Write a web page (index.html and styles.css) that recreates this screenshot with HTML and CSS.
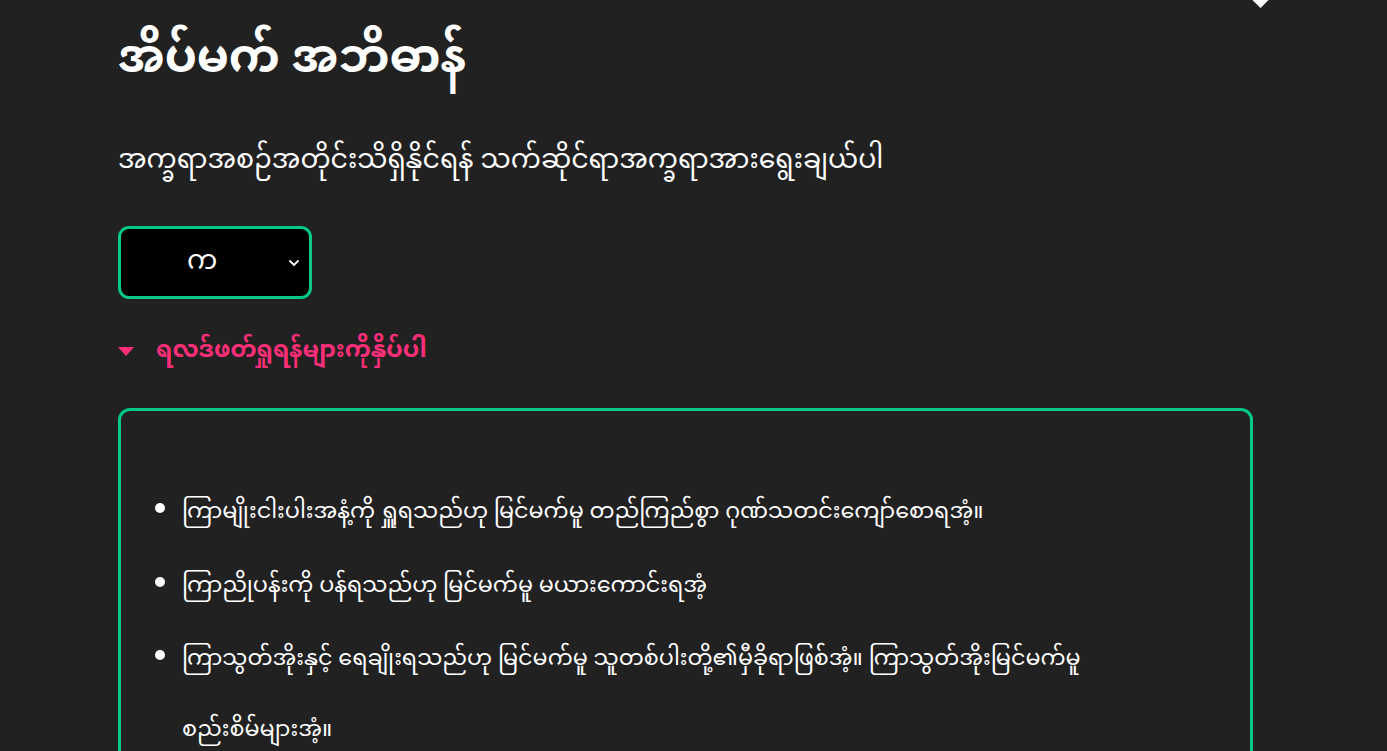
FILE: index.html
```html
<!DOCTYPE html>
<html lang="my">
<head>
<meta charset="utf-8">
<title>အိပ်မက် အဘိဓာန်</title>
<link rel="stylesheet" href="styles.css">
</head>
<body>
<div class="corner-tip"></div>
<main class="page">
  <h1 class="title">အိပ်မက် အဘိဓာန်</h1>
  <p class="subtitle">အက္ခရာအစဉ်အတိုင်းသိရှိနိုင်ရန် သက်ဆိုင်ရာအက္ခရာအားရွေးချယ်ပါ</p>
  <div class="select">
    <span class="select-value">က</span>
    <svg class="chevron" width="12" height="8" viewBox="0 0 12 8"><path d="M1.5 1.5 L6 6 L10.5 1.5" fill="none" stroke="#fff" stroke-width="1.8"/></svg>
  </div>
  <div class="summary">
    <svg class="marker" width="16" height="10" viewBox="0 0 16 10"><path d="M0 0 H16 L8 9 Z" fill="#ff2e78"/></svg>
    <span>ရလဒ်ဖတ်ရှုရန်များကိုနှိပ်ပါ</span>
  </div>
  <section class="results">
    <ul class="list">
      <li>ကြာမျိုးငါးပါးအနံ့ကို ရှူရသည်ဟု မြင်မက်မူ တည်ကြည်စွာ ဂုဏ်သတင်းကျော်စောရအံ့။</li>
      <li>ကြာညိုပန်းကို ပန်ရသည်ဟု မြင်မက်မူ မယားကောင်းရအံ့</li>
      <li>ကြာသွတ်အိုးနှင့် ရေချိုးရသည်ဟု မြင်မက်မူ သူတစ်ပါးတို့၏မှီခိုရာဖြစ်အံ့။ ကြာသွတ်အိုးမြင်မက်မူ စည်းစိမ်များအံ့။</li>
    </ul>
  </section>
</main>
</body>
</html>
```

FILE: styles.css
```css
html, body {
  margin: 0;
  padding: 0;
  background: #212121;
  color: #ffffff;
  font-family: "Noto Sans Myanmar", "Noto Sans", "DejaVu Sans", sans-serif;
  overflow: hidden;
}

.corner-tip {
  position: absolute;
  top: -10px;
  left: 1253px;
  width: 15px;
  height: 15px;
  background: #ffffff;
  transform: rotate(45deg);
}

.page {
  padding: 0 134px 0 118px;
  display: flex;
  flex-direction: column;
  align-items: flex-start;
}

.title {
  margin: 22px 0 0;
  font-size: 46px;
  font-weight: 700;
  line-height: 80px;
}

.subtitle {
  margin: 36px 0 0;
  font-size: 26.8px;
  line-height: 48px;
}

.select {
  margin-top: 40px;
  box-sizing: border-box;
  width: 194px;
  height: 73px;
  background: #000000;
  border: 3px solid #05c98b;
  border-radius: 11px;
  display: flex;
  align-items: center;
  padding: 0 9px 0 66px;
}

.select-value {
  flex: 1;
  font-size: 27px;
}

.chevron {
  display: block;
}

.summary {
  margin-top: 29px;
  display: flex;
  align-items: center;
  gap: 22px;
  color: #ff2e78;
  font-size: 23.5px;
  font-weight: 700;
  line-height: 48px;
}

.marker {
  display: block;
}

.results {
  margin-top: 32px;
  align-self: stretch;
  border: 3px solid #05c98b;
  border-radius: 12px;
  padding: 66px 150px 0 39px;
  min-height: 400px;
}

.list {
  margin: 0;
  padding: 0 0 0 22px;
  font-size: 22.3px;
  line-height: 71px;
}

.list li {
  margin: 0 0 2.5px;
}
```
